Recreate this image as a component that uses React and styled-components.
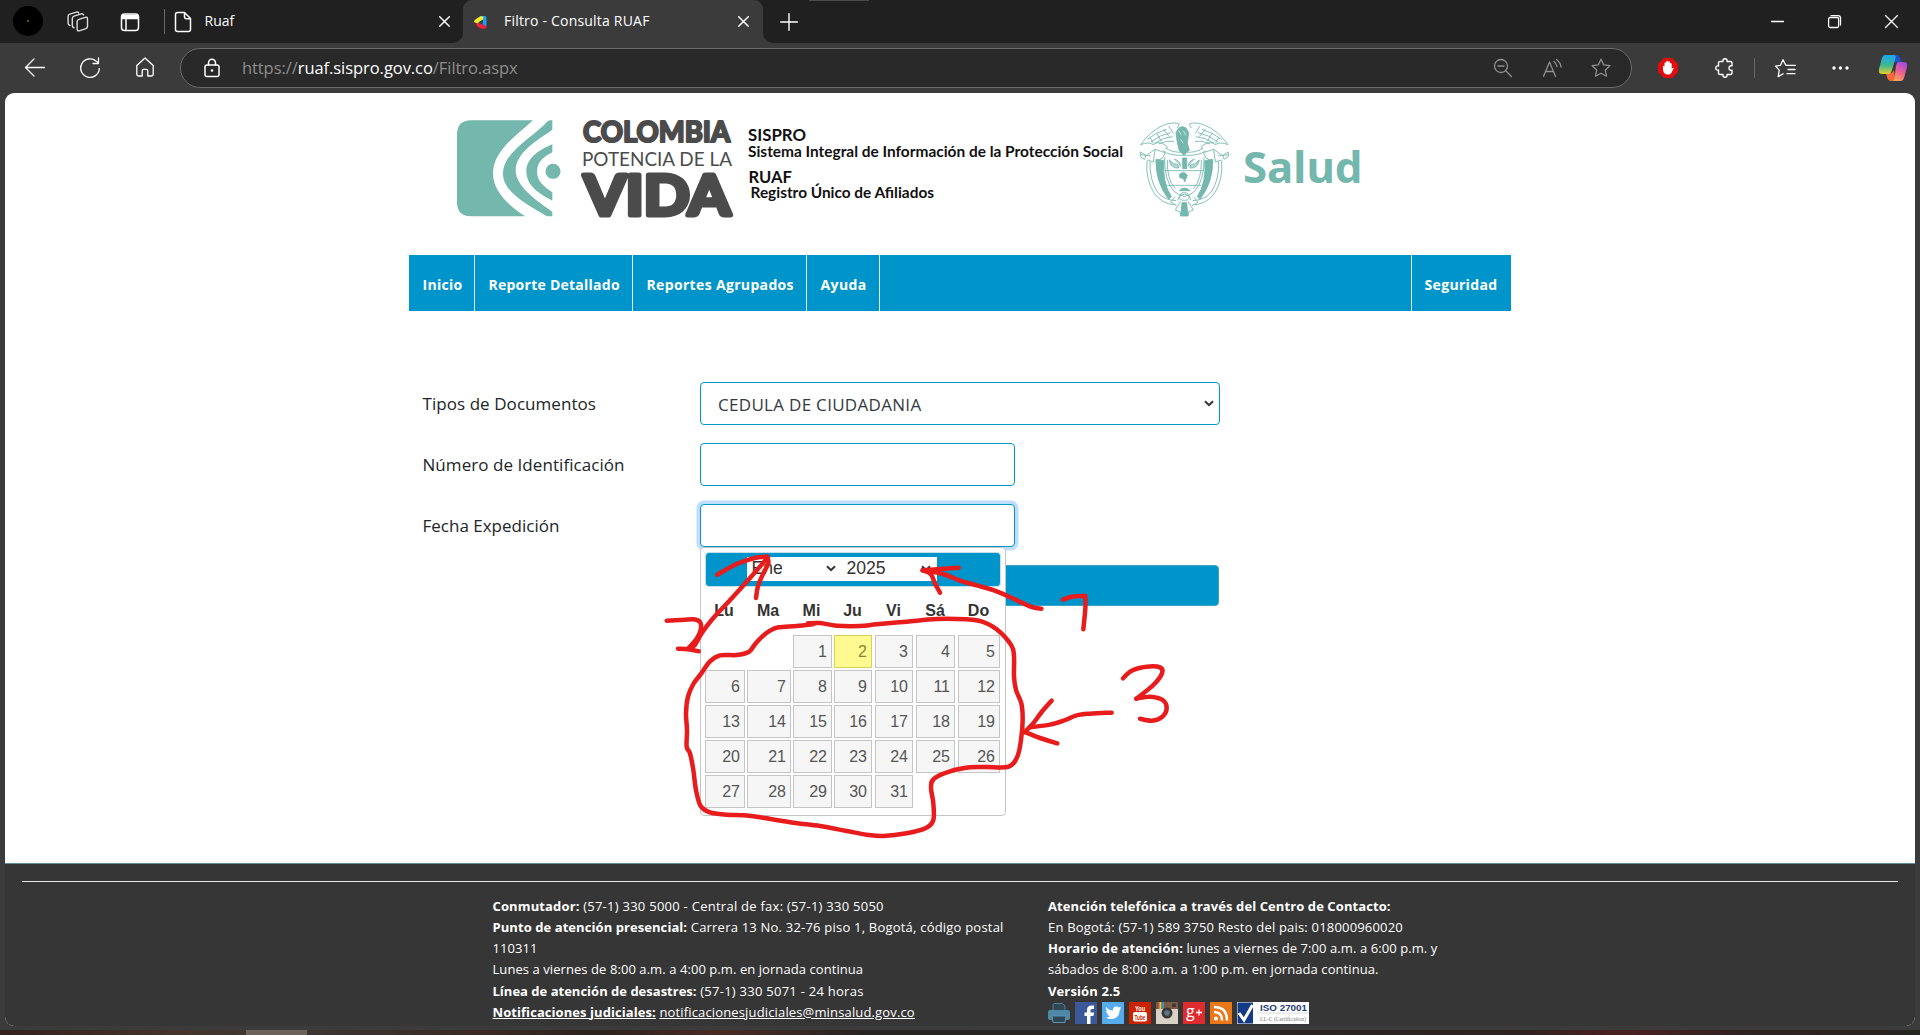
import React from "react";
import styled, { createGlobalStyle } from "styled-components";

const blue = "#0095ca";
const teal = "#73b7ad";

const Global = createGlobalStyle`
  * { box-sizing: border-box; }
  body { margin: 0; background: #3b3b3b; font-family: "Open Sans", "Noto Sans", sans-serif; overflow: hidden; }
`;

const Window = styled.div`
  width: 1920px;
  height: 1035px;
  display: flex;
  flex-direction: column;
  background: #3b3b3b;
`;

/* Browser chrome */
const TabStrip = styled.div`
  display: flex;
  height: 43px;
  background: linear-gradient(#202020 50%, #3b3b3b 50%);
  color: #fff;
  font-size: 14px;
`;
const StripStart = styled.div`
  width: 463px;
  background: #202020;
  border-bottom-right-radius: 10px;
  display: flex;
  align-items: center;
  padding-left: 13px;
`;
const Avatar = styled.div`
  width: 30px;
  height: 30px;
  border-radius: 50%;
  background: radial-gradient(circle, #8a5a20 0 0.6px, #000 1.2px);
  margin: 0 24px 1px 0;
`;
const Divider = styled.div`
  width: 1px;
  height: ${(p) => p.$h}px;
  background: ${(p) => p.$c || "#666"};
`;
const TabTitle = styled.span`
  letter-spacing: ${(p) => p.$ls || 0}px;
  white-space: nowrap;
  flex: 1;
  line-height: 20px;
  margin-bottom: 2px;
`;
const ActiveTab = styled.div`
  width: 300px;
  background: #3b3b3b;
  border-radius: 9px 9px 0 0;
  display: flex;
  align-items: center;
  padding: 0 14px 0 11px;
`;
const StripEnd = styled.div`
  flex: 1;
  background: #202020;
  border-bottom-left-radius: 10px;
  display: flex;
  align-items: center;
  padding-left: 17px;
`;
const Grip = styled.div`
  width: 60px;
  height: 1px;
  background: #4a4a4a;
  align-self: flex-start;
  margin-left: 11px;
`;
const WindowButtons = styled.div`
  margin-left: auto;
  display: flex;
  gap: 44px;
  padding-right: 22px;
`;
const Toolbar = styled.div`
  height: 50px;
  display: flex;
  align-items: center;
  padding: 0 13px 0 24px;
`;
const NavIcons = styled.div`
  width: 156px;
  display: flex;
  gap: 33px;
`;
const AddressBar = styled.div`
  width: 1453px;
  height: 40px;
  border: 1px solid #6a6a6a;
  border-radius: 20px;
  background: #292929;
  display: flex;
  align-items: center;
  padding: 0 20px 0 22.5px;
`;
const Url = styled.div`
  margin-left: 20.5px;
  flex: 1;
  font-size: 16.5px;
  letter-spacing: -0.06px;
  color: #8e8e8e;
  line-height: 24px;
  b { font-weight: 400; color: #fff; }
`;
const BarIcons = styled.div`
  display: flex;
  gap: 29px;
`;
const Extensions = styled.div`
  flex: 1;
  display: flex;
  align-items: center;
  padding-left: 26px;
`;
const Gap = styled.div`width: ${(p) => p.$w}px;`;

/* Site */
const Page = styled.div`
  margin: 0 5px;
  height: 933px;
  background: #fff;
  border-radius: 9px;
  overflow: hidden;
  display: flex;
  flex-direction: column;
`;
const Content = styled.main`
  width: 1102px;
  height: 770px;
  margin: 0 auto;
`;
const Banner = styled.header`
  height: 162px;
  padding: 27px 0 0 48px;
  display: flex;
`;
const Art = styled.svg`
  display: block;
  flex: none;
  margin-left: ${(p) => p.$ml || 0}px;
  overflow: visible;
`;
const Menu = styled.nav`
  height: 56px;
  background: ${blue};
  display: flex;
`;
const MenuItem = styled.a`
  width: ${(p) => p.$w}px;
  padding-left: ${(p) => (p.$end ? 12.5 : 13.5)}px;
  line-height: 60px;
  color: #fff;
  font-size: 14px;
  font-weight: 700;
  letter-spacing: ${(p) => p.$ls}px;
  border-right: ${(p) => (p.$end ? 0 : 1)}px solid #e6f4fa;
  border-left: ${(p) => (p.$end ? 1 : 0)}px solid #e6f4fa;
  margin-left: ${(p) => (p.$end ? "auto" : 0)};
`;
const Form = styled.form`
  padding: 71px 0 0 13.5px;
  display: flex;
  flex-direction: column;
  gap: 18px;
`;
const Field = styled.div`
  display: flex;
  height: 43px;
`;
const Label = styled.label`
  width: 277.5px;
  font-size: 17px;
  letter-spacing: ${(p) => p.$ls || 0}px;
  line-height: 43px;
  color: #212529;
`;
const Control = styled.div`
  position: relative;
  width: ${(p) => p.$w}px;
  height: 43px;
  border: 1px solid ${blue};
  border-radius: 4px;
  background: #fff;
  padding: 0 5px 0 17px;
  display: flex;
  align-items: center;
  justify-content: space-between;
  font-size: 17px;
  letter-spacing: 0.3px;
  color: #343a40;
  box-shadow: ${(p) => (p.$focus ? "0 0 0 3.5px #bfdeff" : "none")};
`;
const SelectText = styled.span`
  padding-top: 2px;
`;
const Submit = styled.button.attrs({ type: "button" })`
  margin-left: 277.5px;
  width: 519px;
  height: 41px;
  border: 1px solid #3aa3c9;
  border-radius: 4px;
  background: ${blue};
`;
const Picker = styled.div`
  position: absolute;
  z-index: 2;
  top: 42px;
  left: -1px;
  width: 306px;
  height: 269px;
  border: 1px solid #c5c5c5;
  border-radius: 4px;
  background: #fff;
  padding: 3.5px 4px 4px 3.5px;
  font-family: "Liberation Sans", Arial, sans-serif;
  letter-spacing: 0;
`;
const PickerHead = styled.div`
  width: 296px;
  height: 35px;
  border: 1px solid #c9dfe8;
  border-radius: 4px;
  background: ${blue};
  display: flex;
  padding: 4px 0 0 41px;
  color: #333;
  font-size: 17.6px;
`;
const PickerSelect = styled.div`
  width: 95px;
  height: 24px;
  background: #fff;
  display: flex;
  align-items: center;
  justify-content: space-between;
  padding: 0 6px 0 5px;
`;
const DayGrid = styled.div`
  display: grid;
  grid-template-columns: 39px 43px 38px 38px 38px 39px 42px;
  grid-template-rows: 46.5px repeat(5, 33px);
  column-gap: 3px;
  row-gap: 2px;
  font-size: 16px;
`;
const Weekday = styled.div`
  font-weight: 700;
  color: #333;
  text-align: center;
  line-height: 48px;
`;
const Day = styled.div`
  grid-column-start: ${(p) => p.$col || "auto"};
  margin-right: ${(p) => (p.$wide ? -1 : 0)}px;
  height: 32.5px;
  border: 1px solid ${(p) => (p.$today ? "#d9d05c" : "#c5c5c5")};
  background: ${(p) => (p.$today ? "#fffa90" : "#f6f6f6")};
  color: ${(p) => (p.$today ? "#8a8330" : "#555")};
  text-align: right;
  padding-right: 3.5px;
  line-height: 31px;
`;
const Marks = styled.svg`
  position: absolute;
  z-index: 3;
  left: 660px;
  top: 530px;
  overflow: visible;
  pointer-events: none;
`;

const Footer = styled.footer`
  flex: 1;
  border-top: 1px solid #5d8f96;
  background: #363636;
  padding: 17px 17px 0;
  color: #fff;
  font-size: 13px;
`;
const Rule = styled.div`
  height: 1px;
  background: #e6e6e6;
  margin-bottom: 13.5px;
`;
const Columns = styled.div`
  display: flex;
  padding-left: 470.5px;
`;
const Column = styled.div`
  width: ${(p) => p.$w}px;
`;
const Line = styled.div`
  white-space: nowrap;
  height: ${(p) => p.$h || 21}px;
  line-height: 21px;
  letter-spacing: ${(p) => p.$ls || 0}px;
  b { letter-spacing: ${(p) => p.$bls || 0}px; }
`;
const Link = styled.a`
  text-decoration: underline;
`;
const Social = styled.div`
  display: flex;
  gap: 5px;
  margin-top: 0.5px;
`;
const Taskbar = styled.div`
  margin-top: 4px;
  height: 5px;
  display: flex;
  padding-left: 246px;
  background: linear-gradient(90deg, #35211c 0, #45352b 190px, #3a3634 300px, #3b2924 480px, #2d221e 600px, #4a2a22 720px, #272524 860px, #262626 1200px, #302222 1520px, #4b2020 1620px, #302222 1740px, #262623 1920px);
`;
const RunningApp = styled.div`
  width: 61px;
  background: #6a625b;
`;

const Svg = ({ s = 20, c = "#fff", w = 1.3, children, vb = "0 0 20 20", ml }) => (
  <Art width={s} height={s} viewBox={vb} fill="none" stroke={c} strokeWidth={w} strokeLinecap="round" strokeLinejoin="round" $ml={ml}>
    {children}
  </Art>
);
const Cross = ({ s = 11, w = 1.5 }) => (
  <Svg s={s} w={w} vb="0 0 11 11"><path d="M.7.7l9.6 9.6M10.3.7L.7 10.3" /></Svg>
);
const Chevron = () => (
  <Art width="10" height="7" viewBox="0 0 10 7" fill="none" stroke="#333" strokeWidth="2"><path d="M1 1.2l4 4 4-4" /></Art>
);

function Chrome() {
  return (
    <>
      <TabStrip>
        <StripStart>
          <Avatar />
          <Svg s={22} vb="0 0 22 22" c="#ddd" w={1.4}>
            <path d="M11.800 8.300l6.500-2q2.200-.6 2.200 1.700v7.200q0 1.800-1.700 2.400l-6.500 2.200q-2.200.6-2.200-1.700v-7.400q0-1.800 1.700-2.400z" />
            <path d="M7 16.800c-1.200-.3-1.700-1-1.700-2.200V7.500c0-1.300.6-2 1.700-2.400l7.200-2.200c1.300-.3 2 .1 2.400 1" />
            <path d="M3 14.500C1.600 14 1.100 13.400 1.100 12.300V5.400c0-1.200.6-2 1.700-2.300L9.500 1.100c1-.3 1.800 0 2.200.8" />
          </Svg>
          <Svg s={20} ml={31} w={1.5}>
            <rect x="1.500" y="2" width="17" height="16.500" rx="3" />
            <path d="M2 3.500h16v3H2z" fill="#fff" />
            <path d="M6 7v11" />
          </Svg>
          <Gap $w={24} />
          <Divider $h={25} />
          <Svg s={20} ml={8} w={1.5}>
            <path d="M4.500.5h7l6 6v11q0 2-2 2h-11q-2 0-2-2v-15q0-2 2-2zM11.500.8v4q0 2 2 2h4" />
          </Svg>
          <Gap $w={11.5} />
          <TabTitle>Ruaf</TabTitle>
          <Cross />
          <Gap $w={13} />
        </StripStart>
        <ActiveTab>
          <Art width="13" height="14" viewBox="0 0 13 14">
            <path d="M5.500 1h4.500q2.500-.5 2.500 2v7q0 2-2 1L8.500 9l.7-4z" fill="#1ca0f2" />
            <path d="M0 7q-.3-1.500 2-3l4-2.500Q8.500.5 9.500 2.500L9 4.500 4.800 7 4 8.800z" fill="#f3ef27" />
            <path d="M1.500 8.500L5 8l4 1.800 3.500 1.400q0 2.500-3 2.600-3 .3-6-2.300z" fill="#f0213c" />
          </Art>
          <Gap $w={17} />
          <TabTitle $ls={0.2}>Filtro - Consulta RUAF</TabTitle>
          <Cross />
        </ActiveTab>
        <StripEnd>
          <Svg s={18} w={1.4} vb="0 0 18 18"><path d="M9 .7v16.600M.7 9h16.600" /></Svg>
          <Grip />
          <WindowButtons>
            <Svg s={13} vb="0 0 13 13"><path d="M.5 6.500h12" /></Svg>
            <Svg s={13} vb="0 0 13 13"><rect x=".6" y="2.500" width="10" height="10" rx="1.500" /><path d="M3 .6h7q2.500 0 2.500 2.500v7" /></Svg>
            <Svg s={13} vb="0 0 13 13"><path d="M.5.5l12 12M12.500.5l-12 12" /></Svg>
          </WindowButtons>
        </StripEnd>
      </TabStrip>
      <Toolbar>
        <NavIcons>
          <Svg s={22} vb="0 0 22 22"><path d="M20.500 10.500H1.500M10 2L1.500 10.500 10 19" /></Svg>
          <Svg s={22} vb="0 0 22 22"><path d="M20.300 11.500A9.300 9.300 0 1 1 17 4l2.500 2M19.500 1v5.500h-5.500" /></Svg>
          <Svg s={20} ml={1}><path d="M1.800 8.500L10 1l8.200 7.500V17q0 2-2 2h-3.400v-5.200q0-1.500-1.500-1.500H8.700q-1.500 0-1.500 1.500V19H3.800q-2 0-2-2z" /></Svg>
        </NavIcons>
        <AddressBar>
          <Svg s={18} vb="0 0 18 18" w={1.5}>
            <rect x="2" y="6" width="14" height="11.500" rx="2" /><path d="M5.500 6V4a3.500 3.800 0 0 1 7 0v2" /><circle cx="9" cy="11.500" r=".6" fill="#fff" />
          </Svg>
          <Url>https://<b>ruaf.sispro.gov.co</b>/Filtro.aspx</Url>
          <BarIcons>
            <Svg c="#8f8f8f"><circle cx="8" cy="8" r="6.500" /><path d="M13 13l5.500 5.500M5 8h6" /></Svg>
            <Svg c="#8f8f8f"><path d="M1.500 18.500L7.500 4l6 14.500M3.500 13.500h8M12 3.500q2.500 2 3 5M14.500 1.500q4 3 4.500 7.500" /></Svg>
            <Svg c="#8f8f8f"><path d="M10 1.200l2.700 5.700 6.200.8-4.600 4.300 1.200 6.200L10 15.200l-5.500 3 1.200-6.200L1.100 7.700l6.200-.8z" /></Svg>
          </BarIcons>
        </AddressBar>
        <Extensions>
          <Art width="20" height="20" viewBox="0 0 20 20">
            <path d="M6 0h8l6 6v8l-6 6H6l-6-6V6z" fill="#e30b0b" />
            <path d="M5 8q1.200-.6 1.500.8V5q1-1.300 1.800 0V3.500q1-1.300 1.800 0v.3q1-1.300 1.800 0V5.500q1-1.200 1.800 0V11l1-1.300q1.300-.3 1 .6l-2.500 5Q11 17.500 8 16.200 5 15 5 11z" fill="#fff" />
          </Art>
          <Svg ml={37} w={1.4}>
            <path d="M5 3.500h3q-.5-2.700 2-2.700t2 2.700h3.500q1.500 0 1.500 1.500v2.800q-3-.4-3 2.200t3 2.300V15q0 1.500-1.500 1.500H12q.5 2.700-2 2.700t-2-2.700H5q-1.500 0-1.500-1.500v-3Q.8 12.500.8 10t2.700-2V5q0-1.500 1.500-1.500z" />
          </Svg>
          <Gap $w={19} />
          <Divider $h={20} />
          <Svg ml={20} s={21} vb="0 0 21 20">
            <path d="M12.500 6.800L10.700 6.500 8 1.200 5.500 6.800l-5 .8 3.700 4-1 6.500 5-2.800M12.500 6.800h8M13 11h7M12 15.200h8" />
          </Svg>
          <Art $ml={36} width="17" height="4" viewBox="0 0 17 4" fill="#fff"><circle cx="2" cy="2" r="1.700" /><circle cx="8.500" cy="2" r="1.700" /><circle cx="15" cy="2" r="1.700" /></Art>
          <Art $ml={30} width="28" height="26" viewBox="0 0 28 26">
            <defs>
              <linearGradient id="cpA" x1="0" y1="0" x2="0" y2="1"><stop offset="0" stopColor="#1fa4ee" /><stop offset=".55" stopColor="#3fb98c" /><stop offset="1" stopColor="#e8d02c" /></linearGradient>
              <linearGradient id="cpB" x1=".7" y1="0" x2=".3" y2="1"><stop offset="0" stopColor="#a04be0" /><stop offset=".5" stopColor="#ef5f94" /><stop offset="1" stopColor="#fba659" /></linearGradient>
            </defs>
            <path d="M14 0h4q2 0 3 3l1 4h-5q-3 0-4 3z" fill="#1d51d6" />
            <path d="M7 18h6l2-3 1 8q-.5 3-3 3h-1q-3 0-4-4z" fill="#f4683c" />
            <path d="M6 0h9q2.500 0 1.500 3L13 15q-1 4-4 4H3q-4 0-3-5L3 3q.8-3 3-3z" fill="url(#cpA)" />
            <path d="M19 7h6q4 0 3 5l-3 11q-1 3-3.500 3H13q2 0 2.500-3L17 11q.8-4 2-4z" fill="url(#cpB)" />
          </Art>
        </Extensions>
      </Toolbar>
    </>
  );
}

function Emblem() {
  const half = (
    <g>
      <path d="M722 134Q752 92 790 76 820 64 838 72L832 84M722 134Q745 124 760 134 775 122 794 134 806 140 800 146M742 118Q770 96 800 88M752 126Q780 104 812 98M764 130Q790 112 818 110M776 132Q800 120 822 124M790 88L808 110M806 78L820 100M770 100L784 124M750 112L760 130" />
      <path d="M721 156L738 166 734 178 721 170ZM740 166L765 148 760 186 742 180M765 148L796 158 788 174 766 186M720 164L752 168" />
      <path d="M741 182Q736 240 764 282 790 314 826 314M750 184Q748 238 772 276 792 300 828 302" />
      <path d="M768 178Q766 246 806 298L814 290Q786 246 792 182Z" fill={teal} />
      <path d="M794 172Q792 240 822 274 834 284 853 290M802 180Q800 238 826 266M794 212H853M802 256H853M790 152Q806 168 853 166M796 144Q820 160 853 156" />
      <path d="M808 180Q812 206 836 204 838 190 822 192ZM822 178Q840 180 842 200" fill={teal} fillOpacity=".55" />
      <path d="M826 290L812 306 830 318M842 304L826 330 840 336 842 348M834 300Q840 276 853 278" />
    </g>
  );
  return (
    <Art $ml={16} width="91" height="97" viewBox="717 60 273 291" fill="none" stroke={teal} strokeWidth="2.600">
      {half}
      <g transform="translate(1706 0) scale(-1 1)">{half}</g>
      <path d="M836 84Q846 76 858 84L866 98 862 130 868 150 852 166 838 152 832 128 828 98Z" fill={teal} />
      <path d="M836 92l8 12M850 92l8 14M842 118l8 12" stroke="#fff" strokeWidth="2" />
      <path d="M848 174h12v32h-12zM838 224q14-14 24 2l-8 20q-2-14-14-12zM838 272q14-16 32 0zM846 308h14l4 40h-22z" fill={teal} />
      <ellipse cx="853" cy="292" rx="14" ry="9" />
    </Art>
  );
}

function SiteBanner() {
  return (
    <Banner>
      <Art width="104" height="97" viewBox="52 61 312 291" fill={teal}>
        <path d="M95 62H280C235 105 160 150 160 222 160 275 210 320 257 350H95Q52 350 52 307V105Q52 62 95 62Z" />
        <path d="M330 62H338V90C295 120 228 158 228 212 228 262 295 305 338 337V350H322C270 318 190 280 190 222 190 155 285 110 322 66Z" />
        <path d="M338 134V158C315 170 292 185 292 215 292 247 315 262 338 278V303C300 284 260 258 260 215 260 175 300 150 338 134Z" />
        <circle cx="340" cy="215" r="22.500" />
      </Art>
      <Art $ml={20} width="152" height="97" viewBox="0 0 152 97" fill="#4b4b4b" stroke="#4b4b4b" strokeLinejoin="round" fontFamily="Lato, sans-serif">
        <text x="2" y="21.500" fontSize="28.500" fontWeight="700" strokeWidth="2.200" textLength="147" lengthAdjust="spacingAndGlyphs">COLOMBIA</text>
        <text x="1" y="46" fontSize="20" fontWeight="400" stroke="none" textLength="150" lengthAdjust="spacingAndGlyphs">POTENCIA DE LA</text>
        <text x="3" y="94.500" fontSize="55" fontWeight="700" strokeWidth="5" textLength="146" lengthAdjust="spacingAndGlyphs">VIDA</text>
      </Art>
      <Art $ml={15} width="375" height="97" viewBox="0 0 375 97" fill="#111" fontFamily="Lato, sans-serif" fontWeight="700">
        <text x="0" y="20.500" fontSize="17" textLength="58" lengthAdjust="spacingAndGlyphs">SISPRO</text>
        <text x="0" y="37" fontSize="15" textLength="375" lengthAdjust="spacingAndGlyphs">Sistema Integral de Información de la Protección Social</text>
        <text x="0.500" y="63" fontSize="17" textLength="43.500" lengthAdjust="spacingAndGlyphs">RUAF</text>
        <text x="2.500" y="78" fontSize="15" textLength="183.500" lengthAdjust="spacingAndGlyphs">Registro Único de Afiliados</text>
      </Art>
      <Emblem />
      <Art $ml={15} width="118" height="97" viewBox="0 0 118 97" fill={teal} fontFamily="Noto Sans, sans-serif" fontWeight="700">
        <text x="-2" y="62.500" fontSize="43.500" textLength="119.500" lengthAdjust="spacingAndGlyphs">Salud</text>
      </Art>
    </Banner>
  );
}

const weekdays = ["Lu", "Ma", "Mi", "Ju", "Vi", "Sá", "Do"];
const days = Array.from({ length: 31 }, (_, i) => i + 1);

function Calendar() {
  return (
    <Picker>
      <PickerHead>
        <PickerSelect>Ene<Chevron /></PickerSelect>
        <PickerSelect>2025<Chevron /></PickerSelect>
      </PickerHead>
      <DayGrid>
        {weekdays.map((d) => <Weekday key={d}>{d}</Weekday>)}
        {days.map((d) => (
          <Day key={d} $col={d === 1 ? 3 : 0} $wide={(d + 1) % 7 < 3} $today={d === 2}>{d}</Day>
        ))}
      </DayGrid>
    </Picker>
  );
}

/* Turns a list of points into a smooth pen stroke. */
function stroke(points) {
  const n = points.trim().split(/\s+/).map(Number);
  const p = [];
  for (let i = 0; i < n.length; i += 2) p.push([n[i], n[i + 1]]);
  let d = `M${p[0]}`;
  for (let i = 0; i < p.length - 1; i++) {
    const a = p[i - 1] || p[i];
    const b = p[i];
    const c = p[i + 1];
    const e = p[i + 2] || c;
    d += `C${b[0] + (c[0] - a[0]) / 6} ${b[1] + (c[1] - a[1]) / 6} ${c[0] - (e[0] - b[0]) / 6} ${c[1] - (e[1] - b[1]) / 6} ${c}`;
  }
  return d;
}

const strokes = [
  "20 272 60 270 100 268 120 276 122 300 110 326 84 356",
  "54 356 84 358 116 364",
  "84 356 104 346 126 308 160 264 216 204 270 144 322 84",
  "172 134 230 102 284 84 322 80",
  "322 80 325 100 310 130 294 168 288 204",
  "1144 236 1112 230 1060 206 1010 184 950 166 900 152 850 132 788 121",
  "788 121 840 117 896 113",
  "788 121 812 132 824 158 840 188",
  "1208 209 1236 200 1274 198",
  "1276 198 1276 235 1270 298",
  "1355 548 1290 551 1250 556 1216 570 1170 584 1110 592",
  "1175 512 1145 546 1118 582 1094 606",
  "1094 606 1140 624 1192 640",
  "1389 445 1415 422 1460 410 1500 412 1506 430 1480 465 1429 506",
  "1429 506 1470 500 1508 510 1520 536 1505 562 1476 572 1440 566",
  "444 280 480 279 530 287 600 288 650 283 740 275 830 267 920 268 964 274 1010 298 1054 346 1062 380 1062 440 1068 480 1084 520 1088 570 1083 630 1072 680 1046 710 980 711 930 712 870 724 822 746 813 772 820 820 820 870 798 894 740 910 670 918 620 914 560 903 480 888 400 878 300 862 250 856 200 854 150 847 122 828 108 780 100 720 90 670 80 650 81 600 78 550 84 500 100 462 124 430 150 394 180 376 230 375 266 366 284 344 304 322 330 302 356 292 410 288 462 282",
];

function HandMarks() {
  return (
    <Marks width="440" height="310" viewBox="0 0 1320 930" fill="none" stroke="#e81c1c" strokeWidth="13.500" strokeLinecap="round" strokeLinejoin="round">
      {strokes.map((s) => <path key={s} d={stroke(s)} />)}
    </Marks>
  );
}

const Icon22 = ({ bg, children }) => (
  <Art width="22" height="22" viewBox="0 0 22 22">{bg && <rect width="22" height="22" fill={bg} />}{children}</Art>
);

function SocialIcons() {
  return (
    <Social>
      <Icon22>
        <path d="M5 9V3q0-1.500 1.500-1.500h8L17 4v5" fill="#2e4753" stroke="#4d7f9b" />
        <path d="M2 8h18q2 0 2 2v6q0 2-2 2H2q-2 0-2-2v-6q0-2 2-2z" fill="#4f87a6" />
        <path d="M4 14h14l-1 6.500H5z" fill="#2e4753" stroke="#5f95b3" />
      </Icon22>
      <Icon22 bg="#3b5998"><path d="M12 22v-8H9.500v-3.500H12V8q0-4.500 4.500-4.500H19V7h-2q-1.500 0-1.500 1.500v2H19l-.5 3.500h-3v8z" fill="#fff" /></Icon22>
      <Icon22 bg="#55acee"><path d="M4 5q3 3.500 7 3.500Q10.500 5 14 4.500q2 0 3 1l2-.8-1 2 1-.2-1.500 2Q17.500 16 10 17q-3.500.3-6-1.500 3 0 4-1.200-2-.3-2.800-2h1.200Q4 11 4 8.800l1.200.3Q3.300 7 4 5z" fill="#fff" /></Icon22>
      <Icon22 bg="#cd2200">
        <rect x="4" y="10" width="14" height="9.500" rx="2" fill="#fff" />
        <text x="6" y="8.500" fontSize="7.500" fontWeight="700" fill="#fff" textLength="10" lengthAdjust="spacingAndGlyphs" fontFamily="Liberation Sans, sans-serif">You</text>
        <text x="5.500" y="17.500" fontSize="7" fontWeight="700" fill="#cd2200" textLength="11" lengthAdjust="spacingAndGlyphs" fontFamily="Liberation Sans, sans-serif">Tube</text>
      </Icon22>
      <Icon22 bg="#d9d2c8">
        <path d="M0 0h22v7H0z" fill="#7b5a45" />
        <path d="M2 0h1.500v7H2z" fill="#d8443a" /><path d="M3.500 0H5v7H3.500z" fill="#e9c342" /><path d="M5 0h1.500v7H5z" fill="#54a566" /><path d="M6.500 0H8v7H6.500z" fill="#3f90c9" />
        <circle cx="11" cy="11" r="5.500" fill="#3b3735" /><circle cx="11" cy="11" r="2.800" fill="#5d7489" /><rect x="16" y="1.500" width="4" height="3.500" rx="1" fill="#3b3735" />
      </Icon22>
      <Icon22 bg="#dd2c2f">
        <text x="3" y="15" fontSize="16" fill="#fff" fontFamily="Open Sans, sans-serif">g</text>
        <path d="M13 10.500h6M16 7.500v6" stroke="#fff" strokeWidth="1.300" />
      </Icon22>
      <Icon22 bg="#ea7819"><g fill="none" stroke="#fff" strokeWidth="2.400"><path d="M4 10q8 0 8 8.500M4 5q13 0 13 13.500" /></g><circle cx="6" cy="16.500" r="2" fill="#fff" /></Icon22>
      <Art width="72" height="22" viewBox="0 0 72 22">
        <rect width="72" height="22" fill="#fff" />
        <rect x=".5" y=".5" width="15.500" height="21" fill="#123a86" />
        <path d="M2 11l5 7L15.500 3" fill="none" stroke="#fff" strokeWidth="3" />
        <text x="23" y="9" fontSize="9" fontWeight="700" fill="#1d3b74" textLength="47" lengthAdjust="spacingAndGlyphs" fontFamily="Liberation Sans, sans-serif">ISO 27001</text>
        <path d="M20 11h50" stroke="#c8ccd6" strokeWidth=".7" />
        <text x="23" y="19" fontSize="6.500" fill="#777" textLength="46" lengthAdjust="spacingAndGlyphs" fontFamily="Liberation Serif, serif">LL-C (Certification)</text>
      </Art>
    </Social>
  );
}

export default function App() {
  return (
    <Window>
      <Global />
      <Chrome />
      <Page>
        <Content>
          <SiteBanner />
          <Menu>
            <MenuItem $w={66} $ls={0.29}>Inicio</MenuItem>
            <MenuItem $w={158} $ls={0.25}>Reporte Detallado</MenuItem>
            <MenuItem $w={174} $ls={0.34}>Reportes Agrupados</MenuItem>
            <MenuItem $w={73} $ls={0.4}>Ayuda</MenuItem>
            <MenuItem $w={100} $ls={0.33} $end>Seguridad</MenuItem>
          </Menu>
          <Form>
            <Field>
              <Label $ls={0.06}>Tipos de Documentos</Label>
              <Control $w={520}><SelectText>CEDULA DE CIUDADANIA</SelectText><Chevron /></Control>
            </Field>
            <Field>
              <Label $ls={0.06}>Número de Identificación</Label>
              <Control $w={315} />
            </Field>
            <Field>
              <Label>Fecha Expedición</Label>
              <Control $w={315} $focus><Calendar /></Control>
            </Field>
            <Submit aria-label="Consultar" />
          </Form>
        </Content>
        <Footer>
          <Rule />
          <Columns>
            <Column $w={555.5}>
              <Line $ls={0.26} $bls={0.13}><b>Conmutador:</b> (57-1) 330 5000 - Central de fax: (57-1) 330 5050</Line>
              <Line $ls={0.21} $bls={0.07}><b>Punto de atención presencial:</b> Carrera 13 No. 32-76 piso 1, Bogotá, código postal</Line>
              <Line $ls={0.07}>110311</Line>
              <Line $ls={0.07} $h={22}>Lunes a viernes de 8:00 a.m. a 4:00 p.m. en jornada continua</Line>
              <Line $ls={0.26} $bls={0.01}><b>Línea de atención de desastres:</b> (57-1) 330 5071 - 24 horas</Line>
              <Line $ls={0.15} $bls={0.07}><Link><b>Notificaciones judiciales:</b></Link> <Link>notificacionesjudiciales@minsalud.gov.co</Link></Line>
            </Column>
            <Column>
              <Line $bls={0.09}><b>Atención telefónica a través del Centro de Contacto:</b></Line>
              <Line $ls={0.19}>En Bogotá: (57-1) 589 3750 Resto del pais: 018000960020</Line>
              <Line $ls={0.08} $bls={0.1}><b>Horario de atención:</b> lunes a viernes de 7:00 a.m. a 6:00 p.m. y</Line>
              <Line $ls={0.08} $h={22}>sábados de 8:00 a.m. a 1:00 p.m. en jornada continua.</Line>
              <Line $bls={0.12}><b>Versión 2.5</b></Line>
              <SocialIcons />
            </Column>
          </Columns>
        </Footer>
      </Page>
      <Taskbar><RunningApp /></Taskbar>
      <HandMarks />
    </Window>
  );
}
